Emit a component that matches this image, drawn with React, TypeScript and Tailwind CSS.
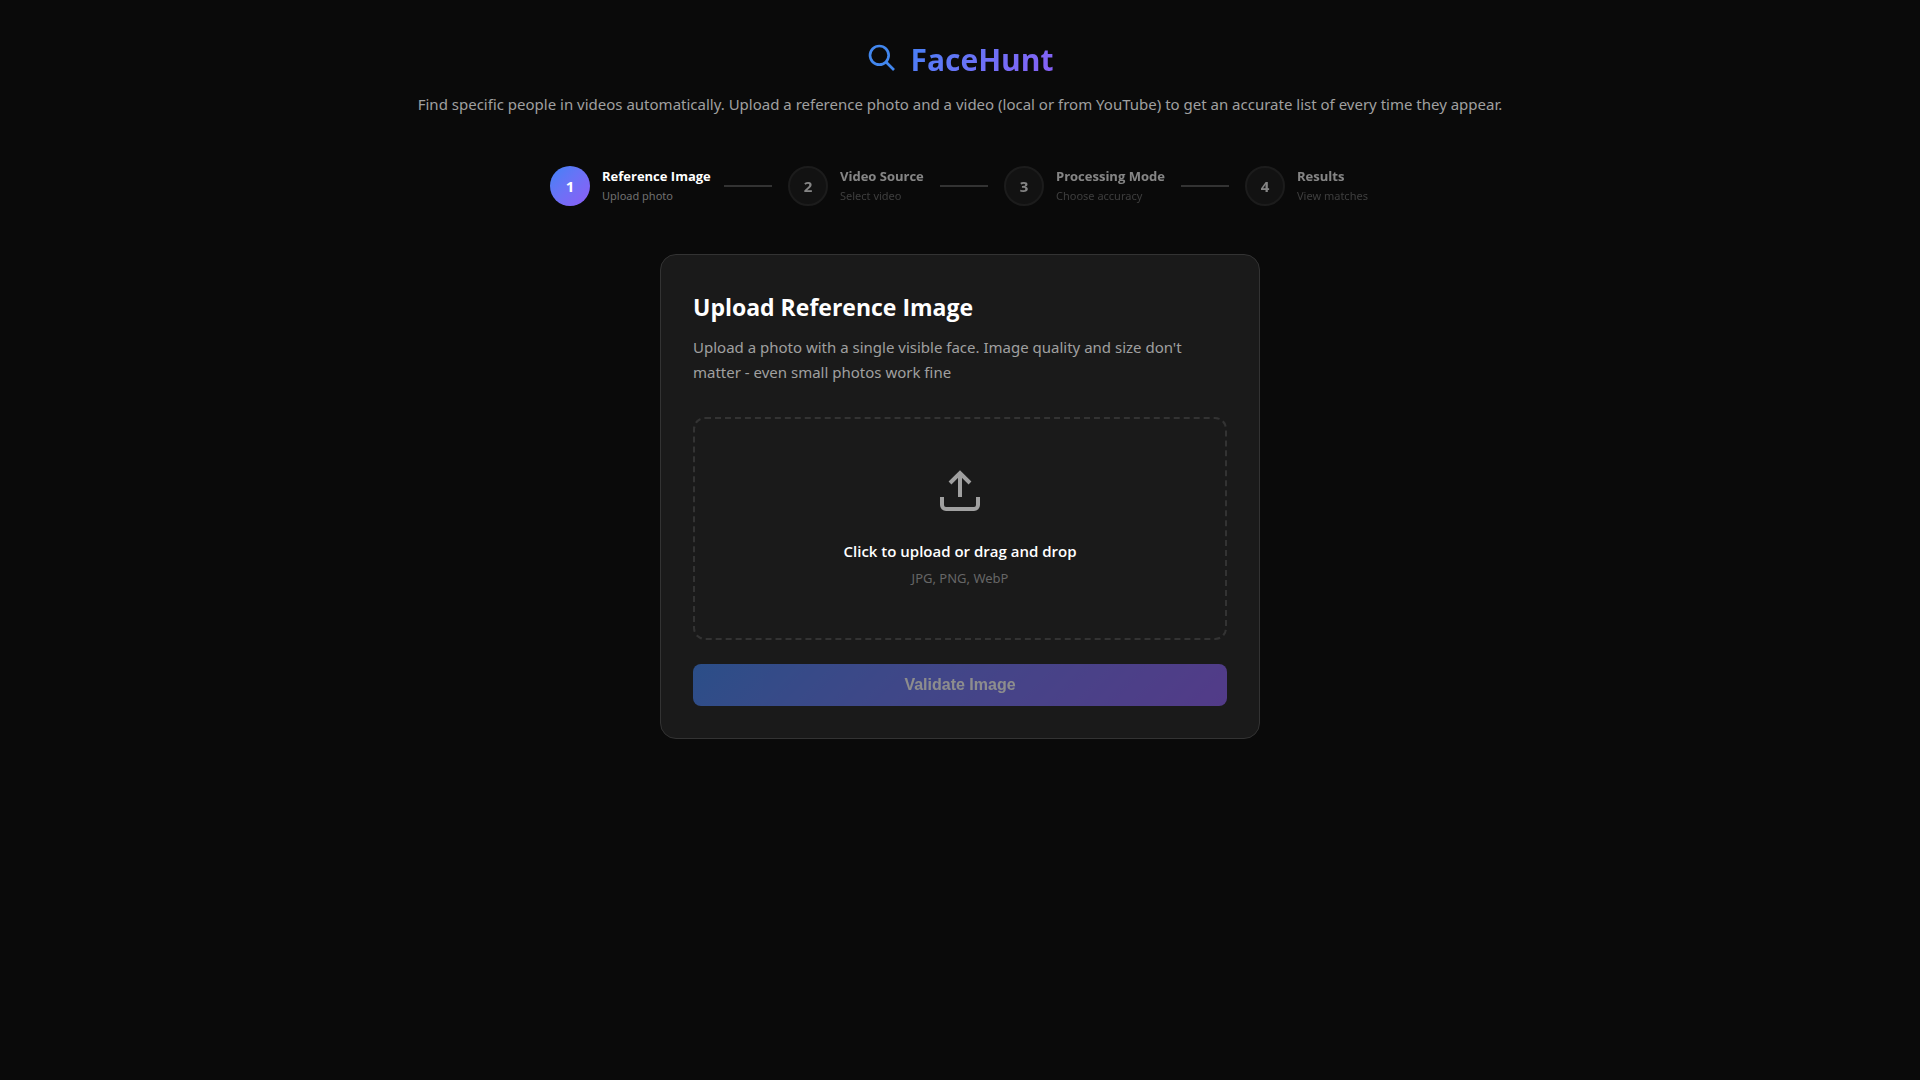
import { Fragment } from "react";

const steps = [
  { title: "Reference Image", note: "Upload photo", width: "w-[106px]" },
  { title: "Video Source", note: "Select video", width: "w-[84px]" },
  { title: "Processing Mode", note: "Choose accuracy", width: "w-[109px]" },
  { title: "Results", note: "View matches", width: "w-[73px]" },
];

function SearchIcon() {
  return (
    <svg className="size-8" viewBox="0 0 24 24" fill="none" stroke="#4287ee" strokeWidth="2" aria-hidden="true">
      <circle cx="10" cy="10" r="7" />
      <path d="M21 21l-6-6" />
    </svg>
  );
}

function UploadIcon() {
  return (
    <svg className="size-12" viewBox="0 0 24 24" fill="none" stroke="#a0a0a0" strokeWidth="2" aria-hidden="true">
      <path d="M21 15v4a2 2 0 0 1-2 2H5a2 2 0 0 1-2-2v-4" />
      <polyline points="17 8 12 3 7 8" />
      <line x1="12" y1="3" x2="12" y2="15" />
    </svg>
  );
}

function Stepper({ current }: { current: number }) {
  return (
    <ol className="mt-[50px] flex items-center justify-center gap-4">
      {steps.map((step, i) => {
        const active = i === current;
        return (
          <Fragment key={step.title}>
            {i > 0 && <li aria-hidden="true" className="h-0.5 w-12 bg-[#333333]" />}
            <li
              aria-current={active ? "step" : undefined}
              className={active ? "flex items-center gap-3" : "flex items-center gap-3 opacity-50"}
            >
              <span
                className={
                  active
                    ? "flex size-10 items-center justify-center rounded-full bg-linear-135 from-[#3b82f6] to-[#8b5cf6] text-[15px] font-bold text-white"
                    : "flex size-10 items-center justify-center rounded-full border-2 border-[#2e2e2e] bg-[#1a1a1a] text-[15px] font-bold text-white"
                }
              >
                {i + 1}
              </span>
              <span className={`flex flex-col whitespace-nowrap ${step.width}`}>
                <span className="text-[13px] leading-5 font-bold text-white">{step.title}</span>
                <span className="font-['Noto_Sans',sans-serif] text-[11px] leading-5 text-[#707070]">{step.note}</span>
              </span>
            </li>
          </Fragment>
        );
      })}
    </ol>
  );
}

export default function App() {
  return (
    <div className="min-h-screen bg-[#0a0a0a] px-8 pt-8 pb-8 font-['Open_Sans',sans-serif] text-white">
      <header className="text-center">
        <div className="flex items-start justify-center gap-3">
          <div className="pt-[10px]">
            <SearchIcon />
          </div>
          <h1 className="bg-linear-135 from-[#3b82f6] to-[#8b5cf6] bg-clip-text text-[30px] leading-14 font-bold text-transparent">
            FaceHunt
          </h1>
        </div>
        <p className="mt-1 font-['Noto_Sans',sans-serif] text-[15px] leading-6 text-[#a0a0a0]">
          Find specific people in videos automatically. Upload a reference photo and a video (local or from YouTube) to
          get an accurate list of every time they appear.
        </p>
      </header>

      <Stepper current={0} />

      <main className="mx-auto mt-12 max-w-[600px] rounded-2xl border border-[#333333] bg-[#1a1a1a] p-8">
        <h2 className="text-[23px] leading-10 font-bold">Upload Reference Image</h2>
        <p className="mt-2 font-['Noto_Sans',sans-serif] text-[15px] leading-[25px] text-[#a0a0a0]">
          Upload a photo with a single visible face. Image quality and size don't matter - even small photos work fine
        </p>
        <button
          type="button"
          className="mt-8 flex w-full flex-col items-center rounded-xl border-2 border-dashed border-[#333333] px-8 py-12"
        >
          <UploadIcon />
          <span className="mt-6 text-[15px] leading-6 font-semibold">Click to upload or drag and drop</span>
          <span className="mt-1 font-['Noto_Sans',sans-serif] text-[13px] leading-[23px] text-[#666666]">
            JPG, PNG, WebP
          </span>
        </button>
        <button
          type="button"
          disabled
          className="mt-6 w-full rounded-lg bg-linear-135 from-[#3b82f6] to-[#8b5cf6] py-[9px] font-['Liberation_Sans',sans-serif] text-base leading-6 font-semibold text-white opacity-50"
        >
          Validate Image
        </button>
      </main>
    </div>
  );
}
